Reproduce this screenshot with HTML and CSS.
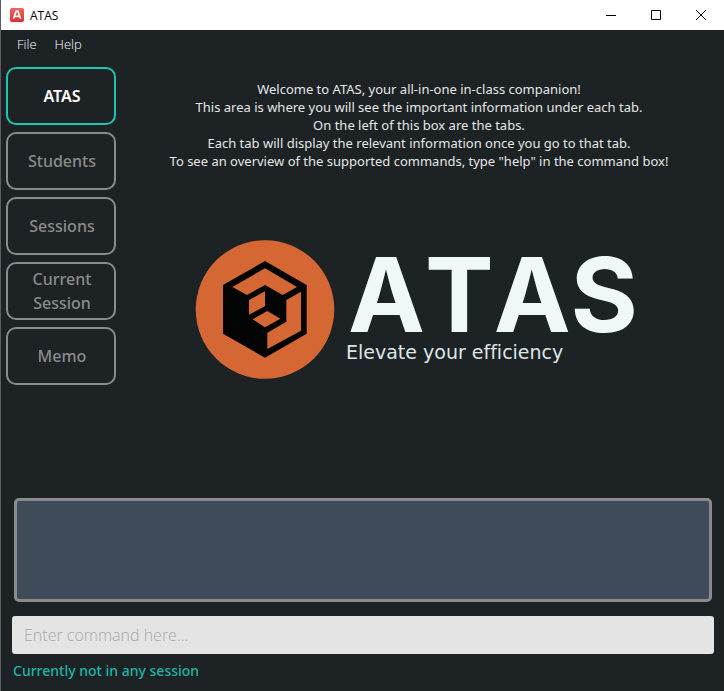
FILE: index.html
```
<!DOCTYPE html>
<html lang="en">
<head>
<meta charset="utf-8">
<title>ATAS</title>
<link rel="stylesheet" href="styles.css">
</head>
<body>
<div class="window">
  <header class="titlebar">
    <svg class="app-icon" viewBox="0 0 14 14" aria-hidden="true">
      <defs><linearGradient id="red" x1="0" y1="0" x2="0" y2="1"><stop offset="0" stop-color="#f4645c"/><stop offset="1" stop-color="#dc2f2f"/></linearGradient></defs>
      <rect width="14" height="14" rx="2" fill="url(#red)"/>
      <path d="M3.4 10.8 6.2 3.2h1.6l2.8 7.6M4.6 8.4h4.8" fill="none" stroke="#fff" stroke-width="1.7"/>
    </svg>
    <h1 class="title">ATAS</h1>
    <div class="controls">
      <button class="control" type="button" aria-label="Minimize"><svg viewBox="0 0 12 12"><path d="M1 6.500h10"/></svg></button>
      <button class="control" type="button" aria-label="Maximize"><svg viewBox="0 0 12 12"><path d="M1.500 1.500h9v9h-9z"/></svg></button>
      <button class="control" type="button" aria-label="Close"><svg viewBox="0 0 12 12"><path d="M1 1l10 10M11 1 1 11"/></svg></button>
    </div>
  </header>
  <nav class="menubar">
    <button class="menu" type="button">File</button>
    <button class="menu" type="button">Help</button>
  </nav>
  <div class="workspace">
    <nav class="tabs">
      <button class="tab active" type="button">ATAS</button>
      <button class="tab" type="button">Students</button>
      <button class="tab" type="button">Sessions</button>
      <button class="tab" type="button">Current Session</button>
      <button class="tab" type="button">Memo</button>
    </nav>
    <main class="content">
      <p class="welcome">Welcome to ATAS, your all-in-one in-class companion!<br>This area is where you will see the important information under each tab.<br>On the left of this box are the tabs.<br>Each tab will display the relevant information once you go to that tab.<br>To see an overview of the supported commands, type "help" in the command box!</p>
      <svg class="logo" viewBox="0 0 458 140">
        <circle cx="75" cy="69.500" r="69.300" fill="#d56735"/>
        <g transform="translate(-5 -10) scale(.33333)">
          <path fill="#020504" d="M240 93 365 165V311L240 383 114 311V165Z"/>
          <path fill="#d56735" d="M240 115 336 171 293 195 240 165 186 195 142 171ZM192 210 240 184V229L192 254ZM203 268 247 243 286 266 240 292ZM348 185V302L247 357V308L304 275V210Z"/>
        </g>
        <text class="logo-name" x="158" y="92">ATAS</text>
        <text class="logo-tagline" x="156" y="119">Elevate your efficiency</text>
      </svg>
    </main>
  </div>
  <footer class="console">
    <textarea class="result" readonly aria-label="Command result"></textarea>
    <input class="command" type="text" placeholder="Enter command here..." aria-label="Command">
    <p class="status">Currently not in any session</p>
  </footer>
</div>
</body>
</html>
```
FILE: styles.css
```
* {
  box-sizing: border-box;
}

body {
  margin: 0;
  background: #1d2225;
  font-family: "Open Sans", "Noto Sans", sans-serif;
}

button {
  padding: 0;
  border: 0;
  background: none;
  font: inherit;
}

.window {
  display: flex;
  flex-direction: column;
  min-height: 100vh;
  border-left: 1px solid #5b5f63;
}

.titlebar {
  display: flex;
  align-items: center;
  height: 30px;
  padding: 0 1px 0 9px;
  background: #fff;
}

.app-icon {
  width: 14px;
  height: 14px;
}

.title {
  flex: 1;
  margin: 0 0 0 6px;
  color: #000;
  font-size: 12px;
  font-weight: 400;
}

.controls {
  display: flex;
}

.control {
  width: 45px;
  height: 30px;
}

.control svg {
  display: block;
  width: 12px;
  height: 12px;
  margin: 0 auto;
  fill: none;
  stroke: #000;
}

.menubar {
  display: flex;
  gap: 18px;
  padding: 4px 16px 6px;
}

.menu {
  color: #fff;
  font-size: 13px;
  font-weight: 300;
  line-height: 20px;
}

.workspace {
  display: flex;
  flex: 1;
  gap: 8px;
  padding: 7px 10px 8px 5px;
}

.tabs {
  display: flex;
  flex: none;
  flex-direction: column;
  gap: 7px;
  width: 110px;
}

.tab {
  height: 58px;
  padding: 0 14px 0 16px;
  border: 2px solid #8b8b8b;
  border-radius: 10px;
  color: #8b8b8b;
  font-family: "Noto Sans", sans-serif;
  font-size: 16px;
  font-weight: 500;
  line-height: 24px;
}

.tab.active {
  border-color: #1fc4b3;
  color: #fff;
  font-weight: 600;
}

.content {
  display: flex;
  flex: 1;
  flex-direction: column;
  align-items: center;
  gap: 70px;
  padding-top: 13px;
}

.welcome {
  margin: 0;
  color: #e6e6e6;
  font-family: "Noto Sans", sans-serif;
  font-size: 13px;
  line-height: 18px;
  text-align: center;
}

.logo {
  width: 458px;
  max-width: 100%;
  overflow: visible;
}

.logo-name {
  fill: #eff8f7;
  font-family: Inter, sans-serif;
  font-size: 103px;
  font-weight: 700;
  font-kerning: none;
}

.logo-tagline {
  fill: #dfe5e6;
  font-family: "DejaVu Sans", sans-serif;
  font-size: 19px;
  font-variant-ligatures: none;
}

.console {
  display: flex;
  flex-direction: column;
  padding: 0 10px 10px 11px;
}

.result {
  height: 104px;
  margin: 0 2px 14px;
  border: 3px solid #8b8b8b;
  border-radius: 5px;
  background: #3f4b58;
  color: #e6e6e6;
  font: inherit;
  resize: none;
}

.command {
  height: 38px;
  padding: 0 12px;
  border: 0;
  border-radius: 3px;
  background: #e4e4e4;
  color: #1d2125;
  font: inherit;
  font-size: 16px;
  font-weight: 300;
}

.command::placeholder {
  color: #a8a8a8;
  opacity: 1;
}

.status {
  margin: 7px 0 0 1px;
  color: #1fb5a5;
  font-family: "Noto Sans", sans-serif;
  font-size: 14px;
  font-weight: 500;
  line-height: 20px;
}
```
